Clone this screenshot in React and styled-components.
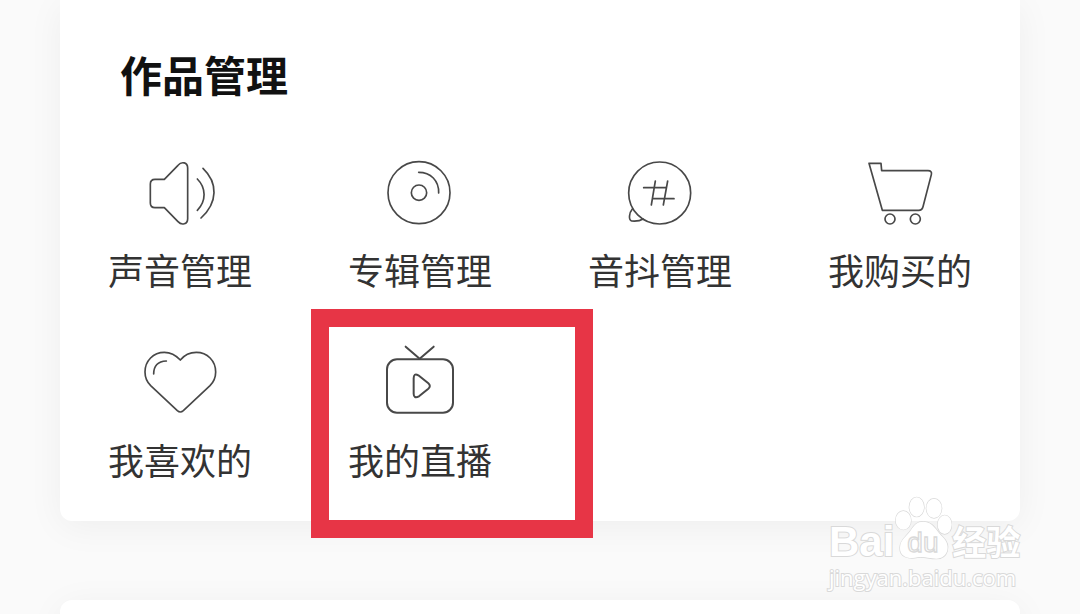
import React from "react";
import styled, { createGlobalStyle } from "styled-components";

const GlobalStyle = createGlobalStyle`
  *, *::before, *::after { box-sizing: border-box; }
  html, body, #root { height: 100%; }
  body {
    margin: 0;
    overflow: hidden;
    background: #fafafa;
    color: #333;
    font-family: "Noto Sans CJK SC", "Noto Sans", sans-serif;
  }
`;

const Page = styled.main`
  position: relative;
  display: flex;
  flex-direction: column;
  gap: 79px;
  height: 100%;
  padding: 0 60px;
  overflow: hidden;
`;

const Card = styled.section`
  flex: none;
  min-height: 120px;
  padding-bottom: 42px;
  background: #fff;
  border-radius: ${(p) => (p.$first ? "0 0 12px 12px" : "12px")};
  box-shadow: 0 6px 36px rgba(0, 0, 0, 0.05);
`;

const Title = styled.h2`
  margin: 0;
  padding: 46px 60px 50px;
  font-size: 42px;
  line-height: 56px;
  font-weight: 700;
  color: #111;
`;

const Grid = styled.div`
  display: grid;
  grid-template-columns: repeat(4, 1fr);
  row-gap: 53px;
`;

const Item = styled.button`
  position: relative;
  display: flex;
  flex-direction: column;
  align-items: center;
  gap: 17px;
  padding: 0;
  border: 0;
  background: none;
  color: inherit;
  font: inherit;
  cursor: pointer;
`;

const Label = styled.span`
  font-size: 36px;
  line-height: 40px;
  white-space: nowrap;
`;

const Icon = styled.svg`
  display: block;
  width: 80px;
  height: 80px;
  fill: none;
  stroke: #484848;
  stroke-width: ${(p) => (p.$heavy ? 6 : 5)};
  stroke-linecap: round;
  stroke-linejoin: round;
`;

const Highlight = styled.span`
  position: absolute;
  z-index: 1;
  top: -33px;
  bottom: -59px;
  left: 11px;
  width: 282px;
  border: 18px solid #e73546;
  pointer-events: none;
`;

const Watermark = styled.div`
  position: absolute;
  right: 57px;
  bottom: 23px;
  display: flex;
  flex-direction: column;
  width: 194px;
  color: #fff;
  -webkit-text-stroke: 2px #d9d9d9;
  paint-order: stroke fill;
`;

const Brand = styled.div`
  display: flex;
  align-items: flex-end;
  height: 64px;
`;

const Latin = styled.span`
  font: 700 42px/42px "Liberation Sans", sans-serif;
`;

const Chinese = styled.span`
  font-size: 34px;
  line-height: 44px;
  font-weight: 700;
`;

const Paw = styled.svg`
  flex: none;
  width: 58px;
  height: 68px;
  fill: #fff;
  stroke: #d9d9d9;
  stroke-width: 4;
`;

const PawText = styled.text`
  font: 400 84px "Liberation Sans", sans-serif;
  stroke-width: 4;
  -webkit-text-stroke: 0;
  paint-order: normal;
`;

const Site = styled.span`
  font: 500 22px/28px "Open Sans", sans-serif;
`;

const SpeakerIcon = () => (
  <Icon viewBox="30 6 240 240" aria-hidden="true">
    <path d="M103 88 144 46C155 33 173 37 173 54V206C173 223 155 227 144 215L103 173H75Q61 173 61 159V102Q61 88 75 88Z" />
    <path d="M202 87C229 114 229 153 202 181M219 55C264 98 264 157 213 204" />
  </Icon>
);

const DiscIcon = () => (
  <Icon viewBox="30 6 240 240" aria-hidden="true">
    <circle cx="147" cy="128" r="93" />
    <circle cx="147" cy="128" r="23" />
    <path d="M146 67C182 67 207 92 206 129" />
  </Icon>
);

const TopicIcon = () => (
  <Icon viewBox="30 6 240 240" aria-hidden="true">
    <circle cx="149" cy="129" r="93" />
    <path d="M136 93 124 165M173 93 160 165M101 113H167M128 146H192" />
    <path d="M67 177C57 189 55 210 65 213C77 214 90 213 99 207" />
  </Icon>
);

const CartIcon = () => (
  <Icon viewBox="30 6 240 240" aria-hidden="true">
    <path d="M57 40H93L95 62H234Q247 62 244 74L219 170Q216 181 206 181H97Z" />
    <circle cx="120" cy="207" r="15" />
    <circle cx="196" cy="207" r="15" />
  </Icon>
);

const HeartIcon = () => (
  <Icon viewBox="30 21 240 240" aria-hidden="true">
    <path d="M151 75C137 60 120 52 103 52C70 52 45 78 45 111C45 128 52 142 62 152L142 227Q151 235 160 227L240 152C250 142 257 128 257 111C257 78 232 52 199 52C180 52 163 60 151 75Z" />
    <path d="M71 117C71 92 86 79 109 78" />
  </Icon>
);

const LiveIcon = () => (
  <Icon viewBox="30 21 240 240" $heavy aria-hidden="true">
    <rect x="51" y="73" width="198" height="160" rx="30" />
    <path d="M107 35 149 71 191 35" />
    <path d="M131 130Q131 113 145 121L175 145Q184 153 175 161L147 184Q131 192 131 176Z" />
  </Icon>
);

const entries = [
  { label: "声音管理", Glyph: SpeakerIcon },
  { label: "专辑管理", Glyph: DiscIcon },
  { label: "音抖管理", Glyph: TopicIcon },
  { label: "我购买的", Glyph: CartIcon },
  { label: "我喜欢的", Glyph: HeartIcon },
  { label: "我的直播", Glyph: LiveIcon, marked: true },
];

export default function App() {
  return (
    <>
      <GlobalStyle />
      <Page>
        <Card $first>
          <Title>作品管理</Title>
          <Grid>
            {entries.map(({ label, Glyph, marked }) => (
              <Item key={label} type="button">
                <Glyph />
                <Label>{label}</Label>
                {marked && <Highlight />}
              </Item>
            ))}
          </Grid>
        </Card>
        <Card />
        <Watermark>
          <Brand>
            <Latin>Bai</Latin>
            <Paw viewBox="248 50 174 204" aria-hidden="true">
              <ellipse cx="276" cy="126" rx="23" ry="28" />
              <ellipse cx="316" cy="86" rx="22" ry="29" />
              <ellipse cx="368" cy="90" rx="23" ry="29" />
              <ellipse cx="400" cy="139" rx="21" ry="28" />
              <path d="M336 130C365 130 375 158 394 176C422 203 408 241 375 241C352 241 339 234 319 237C291 243 265 235 266 208C267 183 285 176 299 155C309 140 317 130 336 130Z" />
              <PawText x="288" y="222">du</PawText>
            </Paw>
            <Chinese>经验</Chinese>
          </Brand>
          <Site>jingyan.baidu.com</Site>
        </Watermark>
      </Page>
    </>
  );
}
